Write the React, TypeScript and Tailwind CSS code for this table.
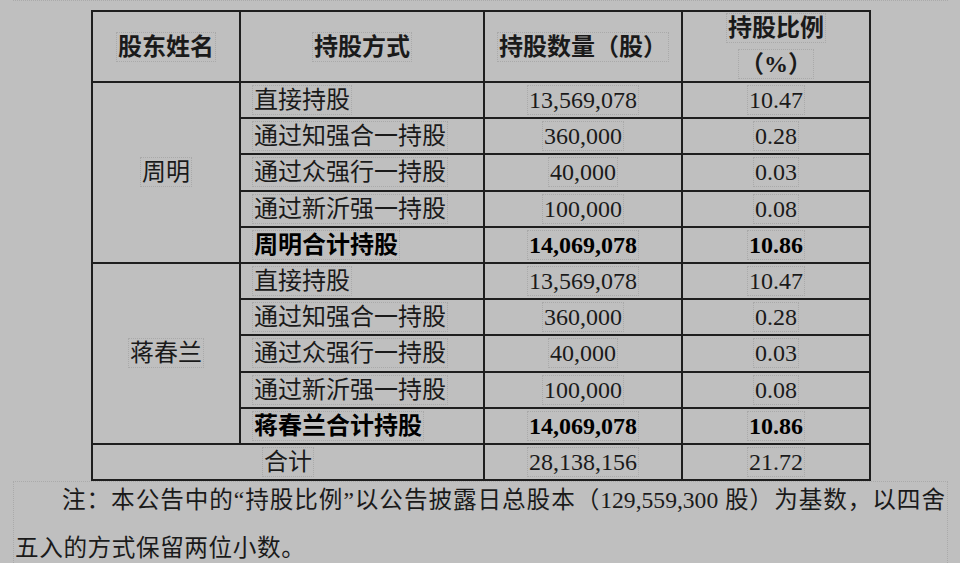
import React from 'react';

type Row = { way: string; qty: string; pct: string; bold?: boolean };

const groups: { name: string; rows: Row[] }[] = [
  {
    name: '周明',
    rows: [
      { way: '直接持股', qty: '13,569,078', pct: '10.47' },
      { way: '通过知强合一持股', qty: '360,000', pct: '0.28' },
      { way: '通过众强行一持股', qty: '40,000', pct: '0.03' },
      { way: '通过新沂强一持股', qty: '100,000', pct: '0.08' },
      { way: '周明合计持股', qty: '14,069,078', pct: '10.86', bold: true },
    ],
  },
  {
    name: '蒋春兰',
    rows: [
      { way: '直接持股', qty: '13,569,078', pct: '10.47' },
      { way: '通过知强合一持股', qty: '360,000', pct: '0.28' },
      { way: '通过众强行一持股', qty: '40,000', pct: '0.03' },
      { way: '通过新沂强一持股', qty: '100,000', pct: '0.08' },
      { way: '蒋春兰合计持股', qty: '14,069,078', pct: '10.86', bold: true },
    ],
  },
];

// dotted text frame, like the editor's text boundaries
function Box({ children, className = '' }: { children: React.ReactNode; className?: string }) {
  return (
    <span className={`inline-block border border-dotted border-[#a9a9a9] px-px leading-[28px] align-middle ${className}`}>
      {children}
    </span>
  );
}

const cell = 'border-2 border-[#1e1e1e] p-0 leading-none';

export default function App() {
  return (
    <div
      className="w-[960px] h-[563px] overflow-hidden bg-[#bfbfbf] text-[#1a1a1a] text-[24px]"
      style={{ fontFamily: '"Liberation Serif", "Noto Sans CJK SC", serif' }}
    >
      <div className="ml-[13px] h-[1px] border-t border-dotted border-[#aaaaaa] w-[935px]" />
      <div className="pt-[9px] pl-[91px]">
        <table className="border-collapse table-fixed w-[778px]">
          <colgroup>
            <col className="w-[148px]" />
            <col className="w-[244px]" />
            <col className="w-[198px]" />
            <col className="w-[188px]" />
          </colgroup>
          <thead>
            <tr className="h-[71px]">
              <th className={`${cell} text-center font-bold`}>
                <Box>股东姓名</Box>
              </th>
              <th className={`${cell} text-center font-bold`}>
                <Box>持股方式</Box>
              </th>
              <th className={`${cell} text-center font-bold`}>
                <Box>持股数量（股）</Box>
              </th>
              <th className={`${cell} text-center font-bold`}>
                <div className="flex flex-col items-center gap-[6px] -mt-[2px]">
                  <Box>持股比例</Box>
                  <Box>（%）</Box>
                </div>
              </th>
            </tr>
          </thead>
          <tbody>
            {groups.map((g) =>
              g.rows.map((r, i) => (
                <tr key={g.name + i} className="h-[36.2px]">
                  {i === 0 && (
                    <td rowSpan={5} className={`${cell} text-center align-middle`}>
                      <Box>{g.name}</Box>
                    </td>
                  )}
                  <td className={`${cell} pl-[11px] text-left ${r.bold ? 'font-bold text-black' : ''}`}>
                    <Box>{r.way}</Box>
                  </td>
                  <td className={`${cell} text-center ${r.bold ? 'font-bold text-black' : ''}`}>
                    <Box>{r.qty}</Box>
                  </td>
                  <td className={`${cell} text-center ${r.bold ? 'font-bold text-black' : ''}`}>
                    <Box>{r.pct}</Box>
                  </td>
                </tr>
              ))
            )}
            <tr className="h-[36px]">
              <td colSpan={2} className={`${cell} text-center`}>
                <Box>合计</Box>
              </td>
              <td className={`${cell} text-center`}>
                <Box>28,138,156</Box>
              </td>
              <td className={`${cell} text-center`}>
                <Box>21.72</Box>
              </td>
            </tr>
          </tbody>
        </table>
      </div>

      {/* note */}
      <div className="ml-[13px] w-[935px] h-[90px] border-l border-r border-t border-dotted border-[#aaaaaa]">
        <div className="-mt-[6px] leading-[48px] ml-[48px] mr-[2px] text-[23.6px] text-justify [text-align-last:justify] [text-justify:inter-character]">
          注：本公告中的“持股比例”以公告披露日总股本（129,559,300 股）为基数，以四舍
        </div>
        <div className="leading-[48px] pl-[1px] text-[23.6px] tracking-[0.6px]">五入的方式保留两位小数。</div>
      </div>
    </div>
  );
}
